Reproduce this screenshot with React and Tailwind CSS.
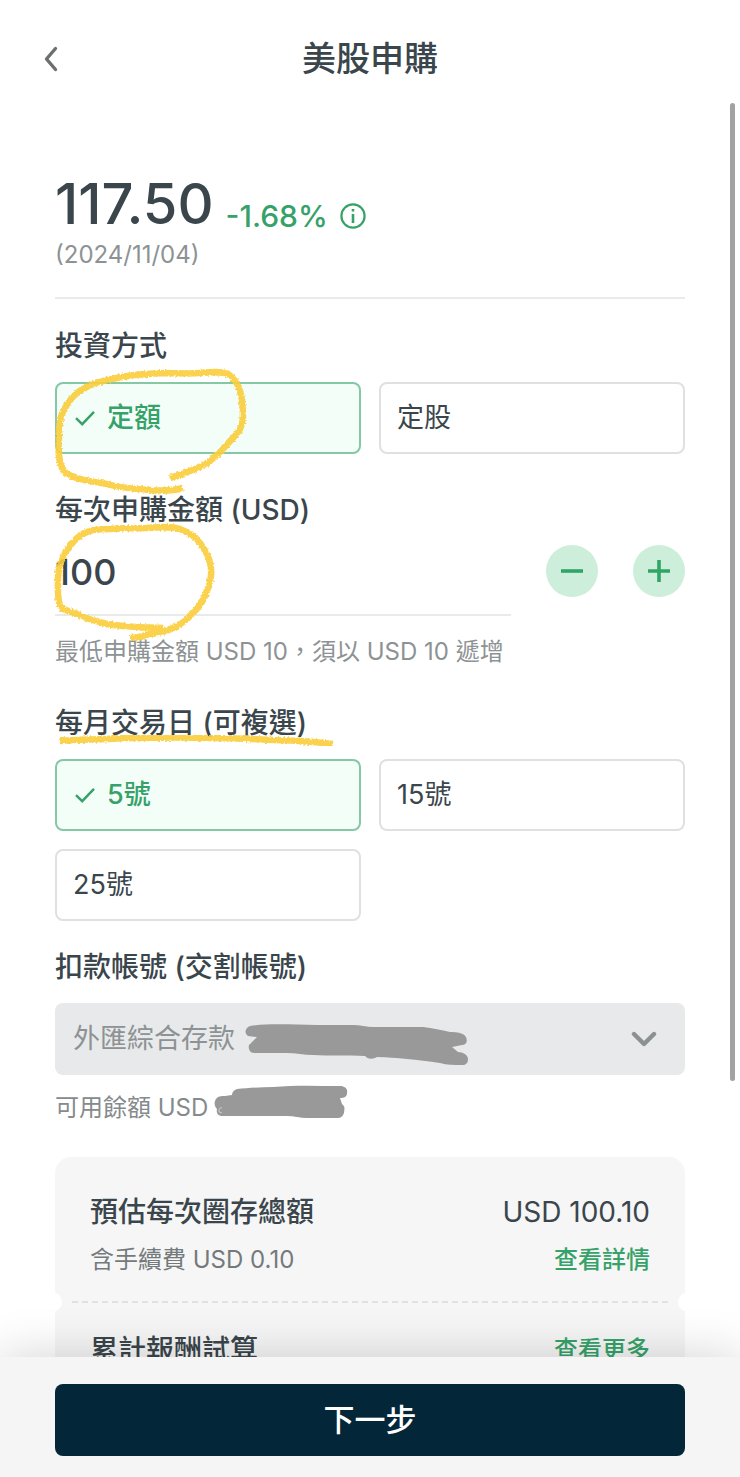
import { useState } from 'react';

const DAYS = ['5號', '15號', '25號'];
const METHODS = ['定額', '定股'];

function CheckIcon() {
  return (
    <svg width="20" height="16" viewBox="0 0 20 16" fill="none" stroke="#36a269" strokeWidth="2.4" className="shrink-0">
      <path d="M1 8.2 7.2 14.2 19 1.8" />
    </svg>
  );
}

function Option({ type, name, label, checked, onChange }) {
  return (
    <label
      className={
        checked
          ? 'relative flex items-center gap-3 h-[72px] px-[18px] rounded-lg border-2 border-[#84c8a5] bg-[#f3fef8] text-[27px] font-medium text-[#36a269] cursor-pointer'
          : 'relative flex items-center h-[72px] px-4 rounded-lg border-2 border-[#dfe0e1] bg-white text-[27px] text-[#3a464c] cursor-pointer'
      }
    >
      <input type={type} name={name} checked={checked} onChange={onChange} className="sr-only" />
      {checked && <CheckIcon />}
      {label}
    </label>
  );
}

// Crayon-like marker stroke
function Marker({ className, viewBox, d }) {
  return (
    <svg className={className} viewBox={viewBox} fill="none" aria-hidden="true">
      <path d={d} stroke="#f9cd3a" strokeOpacity="0.9" strokeWidth="6.5" strokeLinejoin="round" filter="url(#crayon)" />
    </svg>
  );
}

function StepButton({ label, onClick, d }) {
  return (
    <button
      type="button"
      aria-label={label}
      onClick={onClick}
      className="flex items-center justify-center shrink-0 size-[52px] mt-[15px] rounded-full bg-[#cdeeda]"
    >
      <svg width="22" height="22" viewBox="0 0 22 22" stroke="#2fa566" strokeWidth="3.6">
        <path d={d} />
      </svg>
    </button>
  );
}

export default function App() {
  const [method, setMethod] = useState('定額');
  const [amount, setAmount] = useState(100);
  const [days, setDays] = useState(['5號']);

  function toggleDay(day) {
    setDays(days.includes(day) ? days.filter(d => d !== day) : [...days, day]);
  }

  return (
    <div
      lang="zh-Hant"
      className="relative flex flex-col h-screen overflow-hidden bg-white text-[#3a464c] font-['Inter','Noto_Sans_CJK_TC',sans-serif]"
    >
      <svg width="0" height="0" className="absolute" aria-hidden="true">
        <filter id="crayon" x="-10%" y="-30%" width="120%" height="160%">
          <feTurbulence type="fractalNoise" baseFrequency="0.5" numOctaves="2" result="noise" />
          <feDisplacementMap in="SourceGraphic" in2="noise" scale="4" xChannelSelector="R" yChannelSelector="G" />
        </filter>
      </svg>

      {/* Header */}
      <header className="grid grid-cols-[1fr_auto_1fr] items-center h-[118px] px-[35px] shrink-0">
        <button type="button" aria-label="返回" className="flex items-center justify-center size-8">
          <svg width="14" height="26" viewBox="0 0 14 26" fill="none" stroke="#6c6f70" strokeWidth="3.4" strokeLinecap="round" strokeLinejoin="round">
            <path d="M11.5 2.5 2.5 13l9 10.5" />
          </svg>
        </button>
        <h1 className="text-[34px] leading-10 font-medium">美股申購</h1>
      </header>

      <main className="flex-1 min-h-0 overflow-y-auto [scrollbar-width:none] px-[55px] pt-[54px]">
        {/* Price */}
        <section className="border-b-2 border-[#e9eaea] pb-6">
          <div className="flex items-end gap-3">
            <span className="text-[56px] leading-[64px] font-medium">117.50</span>
            <span className="text-[30px] leading-10 text-[#36a269] font-medium">-1.68%</span>
            <button type="button" aria-label="說明" className="flex items-center h-10">
              <svg width="26" height="26" viewBox="0 0 26 26" fill="none" stroke="#36a269" strokeWidth="2.2">
                <circle cx="13" cy="13" r="11.6" />
                <path d="M13 11v9M13 6v2.6" strokeWidth="2.6" />
              </svg>
            </button>
          </div>
          <p className="mt-px text-2xl leading-9 text-[#8d9294]">(2024/11/04)</p>
        </section>

        <section className="relative mt-[27px]">
          <h2 className="text-[28px] leading-10 font-medium">投資方式</h2>
          <div className="grid grid-cols-2 gap-[18px] mt-4">
            {METHODS.map(m => (
              <Option key={m} type="radio" name="method" label={m} checked={method === m} onChange={() => setMethod(m)} />
            ))}
          </div>
          <Marker
            className="absolute left-0 top-10 w-[200px] h-[130px] pointer-events-none"
            viewBox="55 365 200 130"
            d="M183 487C172 490 162 490 150 489C135 488 120 487 107 483C95 481 86 480 77 477C69 474 64 472 62 467C57 456 59 444 59 433C59 422 60 415 65 407C70 398 75 392 83 388C93 382 105 379 117 377C133 373 147 373 163 372C177 372 188 373 200 372C211 371 221 370 228 373C235 377 238 384 240 390C243 399 243 408 243 417C242 427 239 431 232 438C225 446 217 455 207 462C196 469 182 473 170 477"
          />
        </section>

        {/* Amount */}
        <section className="relative mt-9">
          <label htmlFor="amount" className="block text-[28px] leading-10 font-medium">每次申購金額 (USD)</label>
          <div className="flex items-start gap-[35px]">
            <input
              id="amount"
              inputMode="numeric"
              value={amount}
              onChange={e => setAmount(Number(e.target.value.replace(/\D/g, '')))}
              className="flex-1 min-w-0 h-[86px] border-b-2 border-[#e9eaea] text-4xl font-medium outline-none"
            />
            <StepButton label="減少" onClick={() => setAmount(Math.max(10, amount - 10))} d="M0 11h22" />
            <StepButton label="增加" onClick={() => setAmount(amount + 10)} d="M0 11h22M11 0v22" />
          </div>
          <p className="mt-[18px] text-2xl leading-9 text-[#8d9294]">最低申購金額 USD 10，須以 USD 10 遞增</p>
          <Marker
            className="absolute left-0 top-8 w-[165px] h-[85px] overflow-visible pointer-events-none"
            viewBox="55 521 165 85"
            d="M163 627C154 626 146 627 137 626C126 625 117 625 107 623C96 620 86 618 77 613C71 610 63 610 60 605C57 596 58 586 58 577C58 567 61 560 65 552C70 544 75 537 83 533C91 528 100 528 110 528C122 527 134 527 147 527C159 526 171 525 180 528C190 532 196 536 200 542C206 550 210 558 211 567C212 576 210 583 207 590C204 598 201 604 195 610C189 617 182 623 173 627C165 631 158 632 150 633C143 635 137 637 130 637"
          />
        </section>

        {/* Trading days */}
        <section className="relative mt-[33px]">
          <h2 className="text-[28px] leading-10 font-medium">每月交易日 (可複選)</h2>
          <div className="grid grid-cols-2 gap-[18px] mt-4">
            {DAYS.map(day => (
              <Option key={day} type="checkbox" name="days" label={day} checked={days.includes(day)} onChange={() => toggleDay(day)} />
            ))}
          </div>
          <Marker
            className="absolute left-0 top-6 w-[290px] h-[30px] pointer-events-none"
            viewBox="55 726 290 30"
            d="M60 740C80 738 100 739 123 737C150 737 180 736 207 737C230 737 252 738 273 739C293 739 315 741 333 743"
          />
        </section>

        {/* Account */}
        <section className="mt-[26px]">
          <label htmlFor="account" className="block text-[28px] leading-10 font-medium">扣款帳號 (交割帳號)</label>
          <div className="relative mt-4">
            <select
              id="account"
              disabled
              className="block w-full h-[72px] pl-[18px] pr-16 rounded-lg bg-[#e7e9ea] text-[27px] text-[#8d9294] appearance-none opacity-100"
            >
              <option>外匯綜合存款</option>
            </select>
            <svg className="absolute right-7 top-7 pointer-events-none" width="26" height="16" viewBox="0 0 26 16" fill="none" stroke="#8b9193" strokeWidth="4.4" strokeLinecap="round" strokeLinejoin="round">
              <path d="m3 3 10 10L23 3" />
            </svg>
            <svg className="absolute left-[190px] top-[17px] pointer-events-none" width="225" height="50" viewBox="245 1020 225 50" fill="#999" aria-hidden="true">
              <path d="M250 1026C270 1023 295 1025 317 1025H353C360 1025 367 1027 373 1027H423C433 1028 441 1030 450 1032C457 1032 464 1033 466 1037C468 1042 466 1045 462 1045L452 1047L458 1052C463 1052 468 1055 468 1059C468 1063 466 1065 462 1065C454 1065 447 1065 440 1063C428 1061 418 1060 407 1059C397 1058 387 1057 377 1057C373 1059 369 1060 365 1056C347 1055 330 1056 313 1055C304 1055 296 1053 287 1053H254C250 1053 248 1049 249 1045L257 1037L248 1036C244 1033 245 1028 250 1026Z" />
            </svg>
          </div>
          <div className="flex items-center gap-[6px] mt-[15px]">
            <p className="text-2xl leading-9 text-[#858a8c]">可用餘額 USD</p>
            <svg className="overflow-visible" width="134" height="36" viewBox="214 1090 134 36" fill="#999" aria-hidden="true">
              <path d="M237 1089C248 1088 261 1087 273 1087C296 1085 318 1086 340 1086C345 1086 348 1089 347 1093C347 1097 344 1098 340 1098L342 1104C346 1107 344 1110 344 1113C343 1116 341 1118 337 1118H307C300 1118 294 1116 287 1116H223C218 1116 216 1113 217 1109C214 1106 214 1102 216 1099C218 1096 221 1096 225 1096L232 1095C232 1092 234 1090 237 1089Z" />
              <path d="M222 1108c-2-1-3 1-3 3s2 2 3 1" fill="none" stroke="#d4d4d4" />
            </svg>
          </div>
        </section>

        {/* Summary */}
        <section className="mt-[31px] rounded-2xl bg-[#f6f6f6] px-[35px]">
          <div className="pt-[35px] pb-[23px]">
            <div className="flex justify-between text-[28px] leading-10">
              <h3 className="font-medium">預估每次圈存總額</h3>
              <span>USD 100.10</span>
            </div>
            <div className="flex justify-between mt-[10px] text-2xl leading-9">
              <span className="text-[#747a7c]">含手續費 USD 0.10</span>
              <a href="#detail" className="font-medium text-[#36a269]">查看詳情</a>
            </div>
          </div>
          <div className="relative -mx-[18px] border-t-2 border-dashed border-[#e0e1e2]">
            <span className="absolute -left-[30px] -top-[11px] size-5 rounded-full bg-white" />
            <span className="absolute -right-[30px] -top-[11px] size-5 rounded-full bg-white" />
          </div>
          <div className="flex justify-between pt-[27px] pb-9">
            <h3 className="text-[28px] leading-10 font-medium">累計報酬試算</h3>
            <a href="#more" className="text-2xl leading-10 font-medium text-[#36a269]">查看更多</a>
          </div>
        </section>
      </main>

      <div className="absolute right-[5px] top-[103px] bottom-[396px] w-[5px] rounded-full bg-[#a2a2a2]" />

      <footer className="relative shrink-0 bg-[#f5f5f5] px-[55px] pt-[27px] pb-[21px] shadow-[0_0_50px_rgba(0,0,0,0.18)]">
        <button type="button" className="w-full h-[72px] rounded-lg bg-[#032639] text-[31px] font-medium text-white">下一步</button>
      </footer>
    </div>
  );
}
